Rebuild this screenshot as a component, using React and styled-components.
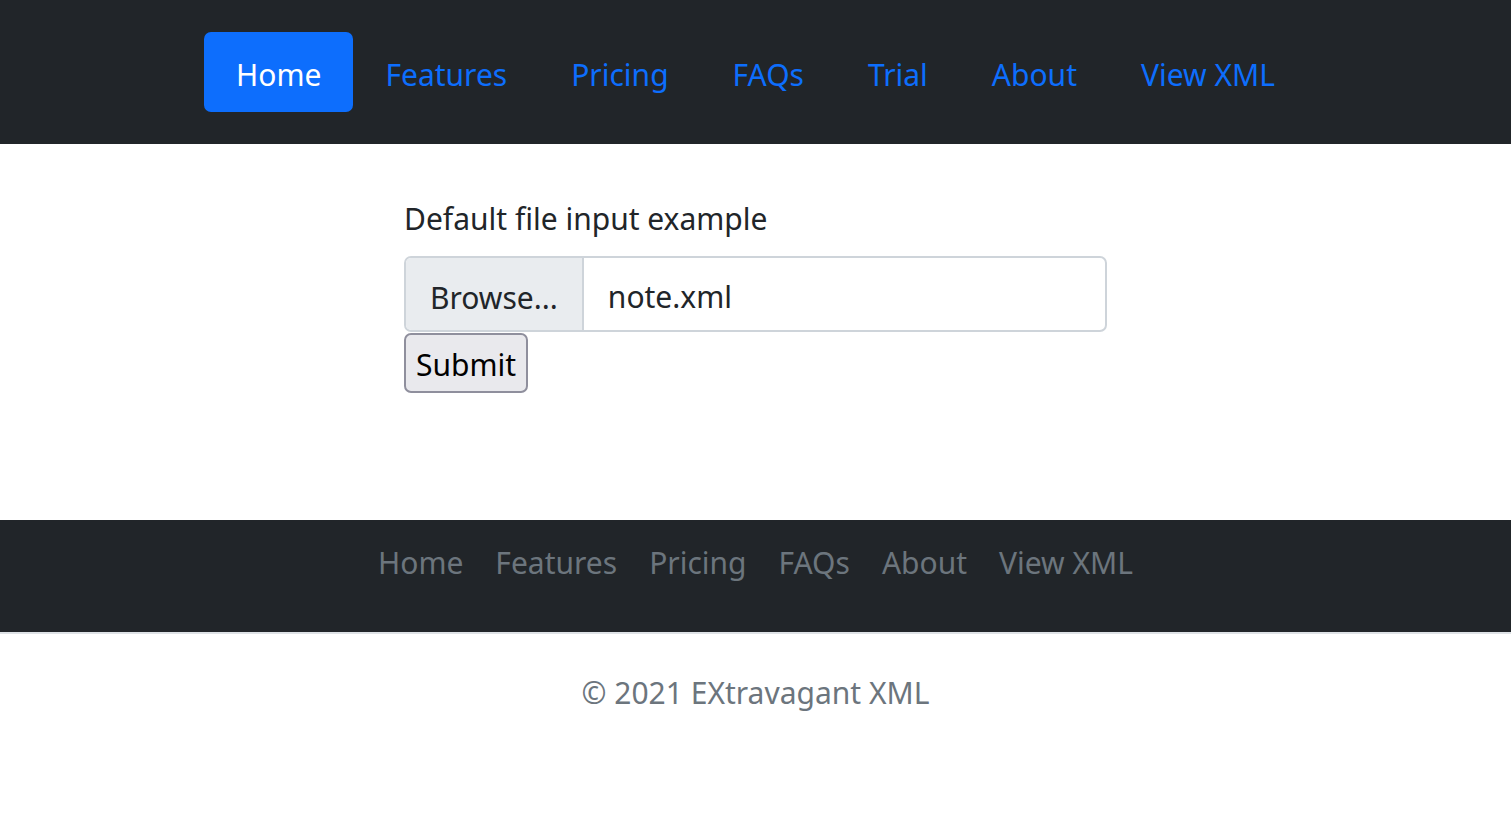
import React, { useState } from "react";
import styled, { createGlobalStyle } from "styled-components";

const GlobalStyle = createGlobalStyle`
  html, body {
    margin: 0;
    padding: 0;
    background: #fff;
  }
  body {
    font-family: "Noto Sans", "Open Sans", sans-serif;
    font-size: 30px;
    line-height: 1.6;
    color: #212529;
  }
  * {
    box-sizing: border-box;
  }
`;

const headerLinks = ["Home", "Features", "Pricing", "FAQs", "Trial", "About", "View XML"];
const footerLinks = ["Home", "Features", "Pricing", "FAQs", "About", "View XML"];

const App = () => {
  const [active, setActive] = useState("Home");

  return (
    <>
      <GlobalStyle />
      <Header>
        <NavList>
          {headerLinks.map((link) => (
            <li key={link}>
              <NavLink
                href="#"
                $active={active === link}
                onClick={(e) => {
                  e.preventDefault();
                  setActive(link);
                }}
              >
                {link}
              </NavLink>
            </li>
          ))}
        </NavList>
      </Header>

      <Main>
        <FormBox onSubmit={(e) => e.preventDefault()}>
          <Label htmlFor="formFile">Default file input example</Label>
          <FileField>
            <BrowseButton type="button">Browse...</BrowseButton>
            <FileName>note.xml</FileName>
          </FileField>
          <SubmitButton type="submit">Submit</SubmitButton>
        </FormBox>
      </Main>

      <Footer>
        <FooterNav>
          {footerLinks.map((link) => (
            <li key={link}>
              <FooterLink href="#">{link}</FooterLink>
            </li>
          ))}
        </FooterNav>
        <Copyright>© 2021 EXtravagant XML</Copyright>
      </Footer>
    </>
  );
};

export default App;

const Header = styled.header`
  background: #212529;
  padding: 32px 0;
  display: flex;
  justify-content: center;
`;

const NavList = styled.ul`
  list-style: none;
  margin: 0;
  padding: 0;
  display: flex;
`;

const NavLink = styled.a`
  display: block;
  padding: 19px 32px 13px;
  font-size: 30px;
  line-height: 48px;
  text-decoration: none;
  border-radius: 7px;
  color: ${(p) => (p.$active ? "#fff" : "#0d6efd")};
  background: ${(p) => (p.$active ? "#0d6efd" : "transparent")};
`;

const Main = styled.main`
  height: 376px;
  padding-top: 48px;
  display: flex;
  justify-content: center;
`;

const FormBox = styled.form`
  width: 703px;
  display: flex;
  flex-direction: column;
  align-items: flex-start;
`;

const Label = styled.label`
  display: block;
  font-size: 30px;
  line-height: 48px;
  padding-top: 3px;
  margin-bottom: 13px;
`;

const FileField = styled.div`
  width: 100%;
  height: 76px;
  display: flex;
  border: 2px solid #ced4da;
  border-radius: 7px;
  overflow: hidden;
`;

const BrowseButton = styled.button`
  font-family: inherit;
  font-size: 30px;
  color: #212529;
  background: #e9ecef;
  border: none;
  border-right: 2px solid #ced4da;
  padding: 6px 24px 0;
  margin: 0;
`;

const FileName = styled.span`
  display: flex;
  align-items: center;
  padding: 6px 24px 0;
  font-size: 30px;
`;

const SubmitButton = styled.button`
  font-family: inherit;
  font-size: 30px;
  line-height: 48px;
  color: #000;
  background: #e9e9ed;
  border: 2px solid #8f8f9d;
  border-radius: 7px;
  padding: 6px 10px 2px;
  margin: 1px 0 0;
`;

const Footer = styled.footer`
  display: flex;
  flex-direction: column;
`;

const FooterNav = styled.ul`
  list-style: none;
  margin: 0;
  padding: 0 0 32px;
  display: flex;
  justify-content: center;
  background: #212529;
  border-bottom: 2px solid #dee2e6;
`;

const FooterLink = styled.a`
  display: block;
  padding: 19px 16px 13px;
  font-size: 30px;
  line-height: 48px;
  color: #6c757d;
  text-decoration: none;
`;

const Copyright = styled.p`
  margin: 0;
  padding-top: 35px;
  text-align: center;
  font-size: 30px;
  line-height: 48px;
  color: #6c757d;
`;
